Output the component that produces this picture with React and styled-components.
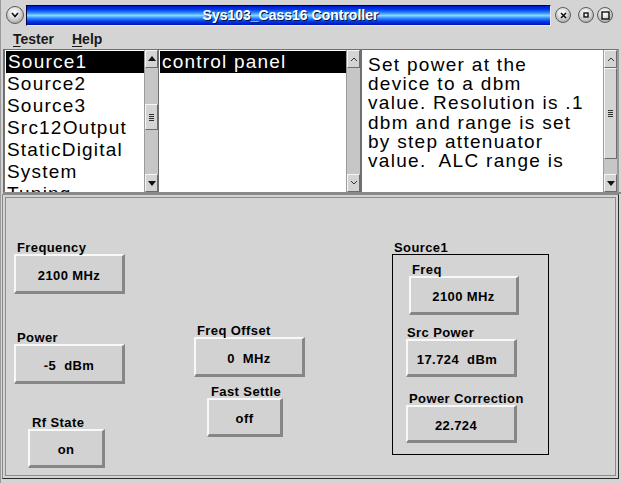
import React from "react";
import styled, { createGlobalStyle } from "styled-components";

const GlobalStyle = createGlobalStyle`
  html, body {
    margin: 0;
    padding: 0;
    background: #d4d4d4;
  }
  body {
    font-family: "Liberation Sans", Arial, sans-serif;
  }
`;

const Window = styled.div`
  width: 621px;
  height: 483px;
  box-sizing: border-box;
  background: #d4d4d4;
  border-left: 1px solid #9a9a9a;
  display: flex;
  flex-direction: column;
  overflow: hidden;
`;

const TitleBar = styled.div`
  height: 28px;
  display: flex;
  align-items: center;
  padding: 2px 0 0 5px;
  box-sizing: border-box;
`;

const RoundButton = styled.div`
  width: ${(p) => p.$size || 16}px;
  height: ${(p) => p.$size || 16}px;
  flex: none;
  border-radius: 50%;
  border: 1px solid #5c5c5c;
  box-sizing: border-box;
  margin-left: ${(p) => p.$gap || 0}px;
  background: radial-gradient(circle at 45% 35%, #ffffff 0%, #e4e4e4 35%, #a8a8a8 80%, #7a7a7a 100%);
  display: flex;
  align-items: center;
  justify-content: center;
`;

const TitleStrip = styled.div`
  flex: none;
  width: 525px;
  height: 21px;
  margin-left: 2px;
  box-sizing: border-box;
  border: 1px solid #000040;
  border-right-color: #e8e8ff;
  border-bottom-color: #e8e8ff;
  background: linear-gradient(
    #0018c8 0%,
    #0038e8 18%,
    #2c86ff 35%,
    #8ad8ff 50%,
    #2c86ff 65%,
    #0038e8 82%,
    #0010b8 100%
  );
  display: flex;
  align-items: center;
  justify-content: center;
  padding-left: 4px;
  color: #ffffff;
  font-size: 14px;
  font-weight: bold;
  text-shadow: 1px 1px 0 #001040;
`;

const MenuBar = styled.div`
  height: 21px;
  display: flex;
  align-items: center;
  padding-left: 12px;
  gap: 18px;
  font-size: 14px;
  font-weight: bold;
  color: #1a1a1a;
`;

const MenuItem = styled.span`
  u {
    text-decoration: underline;
    text-underline-offset: 2px;
  }
`;

const TopPanes = styled.div`
  display: flex;
  height: 143px;
  margin-left: 2px;
  border-bottom: 2px solid #8a8a8a;
`;

const Pane = styled.div`
  display: flex;
  width: ${(p) => p.$w}px;
  flex: none;
  box-sizing: border-box;
  border-top: 1px solid #707070;
  border-left: ${(p) => p.$edge}px solid #707070;
  border-right: ${(p) => (p.$last ? 2 : 0)}px solid #9a9a9a;
`;

const ListArea = styled.div`
  flex: 1;
  background: #ffffff;
  overflow: hidden;
  padding-top: 1px;
  font-size: 19px;
  letter-spacing: 1.2px;
  color: #000;
`;

const ListRow = styled.div`
  height: 22px;
  line-height: 22px;
  padding-left: 2px;
  margin-left: ${(p) => (p.$sel ? 1 : 0)}px;
  white-space: nowrap;
  background: ${(p) => (p.$sel ? "#000" : "transparent")};
  color: ${(p) => (p.$sel ? "#fff" : "#000")};
`;

const TextArea = styled.div`
  flex: 1;
  background: #ffffff;
  overflow: hidden;
  padding: 5px 0 0 6px;
  font-size: 19px;
  line-height: 19.2px;
  letter-spacing: 1.3px;
  white-space: pre;
  color: #000;
`;

const Scroll = styled.div`
  width: 14px;
  flex: none;
  display: flex;
  flex-direction: column;
  background: #c6c6c6;
  border-left: 1px solid #9c9c9c;
  box-sizing: border-box;
`;

const Raised = styled.div`
  box-sizing: border-box;
  border: 1px solid;
  border-color: #f6f6f6 #6c6c6c #6c6c6c #f6f6f6;
  background: #d4d4d4;
  display: flex;
  align-items: center;
  justify-content: center;
`;

const ArrowBtn = styled(Raised)`
  height: 18px;
  flex: none;
`;

const Thumb = styled(Raised)`
  height: ${(p) => p.$h}px;
  flex: none;
`;

const Trough = styled.div`
  flex: ${(p) => (p.$h !== undefined ? "none" : 1)};
  height: ${(p) => (p.$h !== undefined ? `${p.$h}px` : "auto")};
`;

const Grip = styled.div`
  width: 5px;
  height: 7px;
  background: repeating-linear-gradient(#303030 0 1px, transparent 1px 2px);
`;

const Arrow = ({ dir, on }) =>
  on ? (
    <svg width="8" height="6" viewBox="0 0 8 6">
      {dir === "up" ? (
        <polygon points="0,5 8,5 4,0" fill="#111" />
      ) : (
        <polygon points="0,1 8,1 4,6" fill="#111" />
      )}
    </svg>
  ) : (
    <svg width="8" height="6" viewBox="0 0 8 6">
      {dir === "up" ? (
        <polyline points="1,5 4,2 7,5" fill="none" stroke="#333" strokeWidth="1" />
      ) : (
        <polyline points="1,1 4,4 7,1" fill="none" stroke="#333" strokeWidth="1" />
      )}
    </svg>
  );

const LowerPanel = styled.div`
  flex: none;
  height: 285px;
  width: 617px;
  margin-left: 1px;
  box-sizing: border-box;
  border: 1px solid;
  border-color: #8a8a8a #2a2a2a #2a2a2a #8a8a8a;
  box-shadow: inset 0 0 0 2px #d4d4d4, inset 0 0 0 3px #8c8c8c;
  display: flex;
  align-items: flex-start;
`;

const Column = styled.div`
  display: flex;
  flex-direction: column;
  align-items: flex-start;
  margin-left: ${(p) => p.$left}px;
  margin-top: ${(p) => p.$top}px;
`;

const FieldWrap = styled.div`
  display: flex;
  flex-direction: column;
  align-items: flex-start;
  margin-left: ${(p) => p.$left || 0}px;
  margin-top: ${(p) => p.$top || 0}px;
`;

const FieldLabel = styled.div`
  height: 12px;
  line-height: 12px;
  padding-left: ${(p) => p.$indent}px;
  font-size: 13px;
  font-weight: bold;
  letter-spacing: 0.4px;
  color: #000;
  white-space: nowrap;
  position: relative;
  z-index: 1;
`;

const ValueButton = styled.div`
  width: ${(p) => p.$w}px;
  height: ${(p) => p.$h}px;
  box-sizing: border-box;
  border-style: solid;
  border-width: 2px 3px 3px 2px;
  border-color: #f8f8f8 #868686 #868686 #f8f8f8;
  background: #d2d2d2;
  display: flex;
  align-items: center;
  justify-content: center;
  padding: 3px ${(p) => p.$pr || 0}px 0 0;
  font-size: 13px;
  font-weight: bold;
  letter-spacing: 0.4px;
  white-space: pre;
  color: #000;
`;

const GroupTitle = styled.div`
  height: 12px;
  line-height: 12px;
  padding-left: 2px;
  font-size: 13px;
  font-weight: bold;
  letter-spacing: 0.4px;
`;

const GroupBox = styled.div`
  width: 157px;
  height: 201px;
  box-sizing: border-box;
  border: 1px solid #000;
  display: flex;
  flex-direction: column;
  align-items: flex-start;
`;

const Field = ({ label, value, w, h, left, top, indent = 3, pr }) => (
  <FieldWrap $left={left} $top={top}>
    <FieldLabel $indent={indent}>{label}</FieldLabel>
    <ValueButton $w={w} $h={h} $pr={pr}>
      {value}
    </ValueButton>
  </FieldWrap>
);

const ScrollBar = ({ upOn, downOn, before, thumb, grip }) => (
  <Scroll>
    <ArrowBtn>
      <Arrow dir="up" on={upOn} />
    </ArrowBtn>
    {thumb ? (
      <>
        <Trough $h={before} />
        <Thumb $h={thumb}>{grip && <Grip />}</Thumb>
        <Trough />
      </>
    ) : (
      <Trough />
    )}
    <ArrowBtn>
      <Arrow dir="down" on={downOn} />
    </ArrowBtn>
  </Scroll>
);

const items = ["Source1", "Source2", "Source3", "Src12Output", "StaticDigital", "System", "Tuning"];

const help = [
  "Set power at the",
  "device to a dbm",
  "value. Resolution is .1",
  "dbm and range is set",
  "by step attenuator",
  "value.  ALC range is",
].join("\n");

export default function App() {
  return (
    <>
      <GlobalStyle />
      <Window>
        <TitleBar>
          <RoundButton $size={18}>
            <svg width="8" height="6" viewBox="0 0 8 6">
              <polyline points="1,1 4,4.5 7,1" fill="none" stroke="#111" strokeWidth="1.6" />
            </svg>
          </RoundButton>
          <TitleStrip>Sys103_Cass16 Controller</TitleStrip>
          <RoundButton $gap={4}>
            <svg width="7" height="7" viewBox="0 0 7 7">
              <path d="M1 1 L6 6 M6 1 L1 6" stroke="#111" strokeWidth="1.6" />
            </svg>
          </RoundButton>
          <RoundButton $gap={7}>
            <svg width="6" height="6" viewBox="0 0 6 6">
              <rect x="1" y="1" width="4" height="4" fill="none" stroke="#111" strokeWidth="1.4" />
            </svg>
          </RoundButton>
          <RoundButton $gap={3}>
            <svg width="9" height="9" viewBox="0 0 9 9">
              <rect x="1" y="1" width="7" height="7" fill="none" stroke="#111" strokeWidth="1.4" />
            </svg>
          </RoundButton>
        </TitleBar>

        <MenuBar>
          <MenuItem>
            <u>T</u>ester
          </MenuItem>
          <MenuItem>
            <u>H</u>elp
          </MenuItem>
        </MenuBar>

        <TopPanes>
          <Pane $w={155} $edge={2}>
            <ListArea>
              {items.map((it, i) => (
                <ListRow key={it} $sel={i === 0}>
                  {it}
                </ListRow>
              ))}
            </ListArea>
            <ScrollBar upOn downOn before={36} thumb={26} grip />
          </Pane>
          <Pane $w={202} $edge={1}>
            <ListArea>
              <ListRow $sel>control panel</ListRow>
            </ListArea>
            <ScrollBar />
          </Pane>
          <Pane $w={259} $edge={2} $last>
            <TextArea>{help}</TextArea>
            <ScrollBar downOn before={0} thumb={91} grip />
          </Pane>
        </TopPanes>

        <LowerPanel>
          <Column $left={11} $top={47}>
            <Field label="Frequency" value="2100 MHz" w={111} h={40} />
            <Field label="Power" value="-5  dBm" w={111} h={40} top={38} />
            <Field label="Rf State" value="on" w={77} h={39} top={33} left={14} indent={4} />
          </Column>
          <Column $left={69} $top={130}>
            <Field label="Freq Offset" value="0  MHz" w={111} h={40} />
            <Field label="Fast Settle" value="off" w={76} h={39} top={9} left={13} indent={4} />
          </Column>
          <Column $left={87} $top={47}>
            <GroupTitle>Source1</GroupTitle>
            <GroupBox>
              <Field label="Freq" value="2100 MHz" w={110} h={39} left={16} top={9} />
              <Field label="Src Power" value="17.724  dBm" w={111} h={38} left={13} top={12} indent={1} pr={8} />
              <Field label="Power Correction" value="22.724" w={111} h={38} left={13} top={16} pr={10} />
            </GroupBox>
          </Column>
        </LowerPanel>
      </Window>
    </>
  );
}
